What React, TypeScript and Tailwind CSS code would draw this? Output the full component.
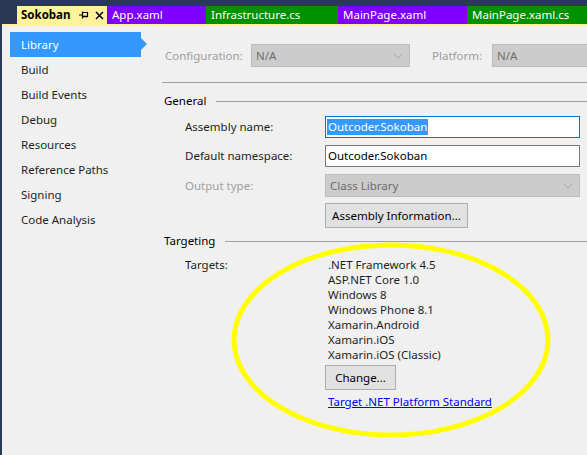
import React from "react";

const tabs = [
  { name: "App.xaml", w: "w-[99px]", bg: "bg-[#8000FF]" },
  { name: "Infrastructure.cs", w: "w-[132px]", bg: "bg-[#009100]" },
  { name: "MainPage.xaml", w: "w-[129px]", bg: "bg-[#8000FF]" },
  { name: "MainPage.xaml.cs", w: "w-[120px]", bg: "bg-[#009100]" },
];

const navItems = ["Build", "Build Events", "Debug", "Resources", "Reference Paths", "Signing", "Code Analysis"];

const targets = [
  ".NET Framework 4.5",
  "ASP.NET Core 1.0",
  "Windows 8",
  "Windows Phone 8.1",
  "Xamarin.Android",
  "Xamarin.iOS",
  "Xamarin.iOS (Classic)",
];

function Chevron() {
  return (
    <svg width="10" height="6" viewBox="0 0 10 6" className="shrink-0">
      <path d="M0.5 0.5 L5 5 L9.5 0.5" fill="none" stroke="#A8A8A8" strokeWidth="1" />
    </svg>
  );
}

function SectionHeader({ title }: { title: string }) {
  return (
    <div className="flex items-center h-[16px] pl-[2px]">
      <span className="text-black leading-[16px]">{title}</span>
      <div className="flex-1 h-px bg-[#A0A0A0] ml-[10px]" />
    </div>
  );
}

export default function App() {
  return (
    <div className="relative w-[587px] h-[455px] overflow-hidden bg-[#F0F0F0] border-l-2 border-[#293955] font-['Noto_Sans',sans-serif] text-[11.5px] text-[#1E1E1E]">
      {/* document tabs */}
      <div className="h-[6px] bg-[#293955]" />
      <div className="flex h-[18px] bg-[#293955]">
        <div className="w-[15px]" />
        <div className="w-[90px] bg-[#FFF29D] flex items-center pl-[4px] text-black leading-[18px]">
          <span className="w-[51px] font-bold text-[11.5px]">Sokoban</span>
          <svg width="10" height="10" viewBox="0 0 10 10" className="ml-[7px]">
            <path d="M0 5 H3.5 M3.5 1.5 V8.5 M3.5 2.5 H8.5 V6.5 H3.5" fill="none" stroke="#000" strokeWidth="1.2" />
            <path d="M3.5 6.5 H8.5" stroke="#000" strokeWidth="1.6" />
          </svg>
          <svg width="9" height="9" viewBox="0 0 9 9" className="ml-[6px]">
            <path d="M1 1 L8 8 M8 1 L1 8" stroke="#000" strokeWidth="1.5" />
          </svg>
        </div>
        {tabs.map((t) => (
          <div key={t.name} className={`${t.w} ${t.bg} flex items-center pl-[5px] text-white leading-[18px]`}>
            {t.name}
          </div>
        ))}
      </div>
      <div className="h-[2px] bg-[#FFF29D]" />

      <div className="flex">
        {/* side navigation */}
        <div className="w-[160px] shrink-0 pt-[6px] pl-[8px]">
          <div className="relative w-[131px] h-[25px] bg-[#3399FF] text-white flex items-center pl-[11px]">
            Library
            <div className="absolute right-[-6px] top-[6px] w-0 h-0 border-y-[6px] border-y-transparent border-l-[6px] border-l-[#3399FF]" />
          </div>
          {navItems.map((n) => (
            <div key={n} className="h-[25px] flex items-center pl-[11px]">
              {n}
            </div>
          ))}
        </div>

        {/* property page */}
        <div className="flex-1 pt-[18px]">
          <div className="flex items-center h-[23px]">
            <span className="w-[89px] pl-[3px] text-[#9D9D9D]">Configuration:</span>
            <div className="w-[159px] h-[23px] bg-[#CCCCCC] border border-[#BCBCBC] flex items-center justify-between pl-[4px] pr-[6px] text-[#6D6D6D]">
              <span>N/A</span>
              <Chevron />
            </div>
            <span className="w-[60px] ml-[22px] text-[#9D9D9D]">Platform:</span>
            <div className="w-[110px] h-[23px] bg-[#CCCCCC] border border-[#BCBCBC] flex items-center pl-[4px] text-[#6D6D6D]">
              N/A
            </div>
          </div>

          <div className="mt-[15px] h-px bg-[#A0A0A0]" />

          <div className="mt-[10px]">
            <SectionHeader title="General" />
          </div>

          <div className="mt-[7px] flex items-center h-[22px]">
            <span className="w-[163px] pl-[23px]">Assembly name:</span>
            <div className="w-[255px] h-[22px] bg-white border border-[#0078D7] flex items-center pl-[1px]">
              <span className="bg-[#3399FF] text-white leading-[16px] px-[1px]">Outcoder.Sokoban</span>
            </div>
          </div>

          <div className="mt-[7px] flex items-center h-[22px]">
            <span className="w-[163px] pl-[23px]">Default namespace:</span>
            <div className="w-[255px] h-[22px] bg-white border border-[#7A7A7A] flex items-center pl-[2px] text-black">
              Outcoder.Sokoban
            </div>
          </div>

          <div className="mt-[7px] flex items-center h-[23px]">
            <span className="w-[163px] pl-[23px] text-[#A0A0A0]">Output type:</span>
            <div className="w-[255px] h-[23px] bg-[#CCCCCC] border border-[#BCBCBC] flex items-center justify-between pl-[4px] pr-[6px] text-[#6D6D6D]">
              <span>Class Library</span>
              <Chevron />
            </div>
          </div>

          <div className="mt-[6px] pl-[163px]">
            <div className="w-[143px] h-[25px] bg-[#E1E1E1] border border-[#ADADAD] flex items-center justify-center text-black">
              Assembly Information...
            </div>
          </div>

          <div className="mt-[5px]">
            <SectionHeader title="Targeting" />
          </div>

          <div className="mt-[8px] flex">
            <span className="w-[163px] pl-[23px] leading-[15px]">Targets:</span>
            <div>
              {targets.map((t) => (
                <div key={t} className="pl-[3px] leading-[15px] h-[15px]">
                  {t}
                </div>
              ))}
              <div className="mt-[3px] w-[71px] h-[25px] bg-[#E1E1E1] border border-[#ADADAD] flex items-center justify-center text-black">
                Change...
              </div>
              <div className="mt-[4px] pl-[3px] leading-[16px] text-[#0000FF] underline">
                Target .NET Platform Standard
              </div>
            </div>
          </div>
        </div>
      </div>

      {/* annotation */}
      <svg className="absolute left-0 top-0 pointer-events-none" width="587" height="455">
        <ellipse cx="389" cy="340" rx="157" ry="95" fill="none" stroke="#FFFF00" strokeWidth="5" />
      </svg>
    </div>
  );
}
